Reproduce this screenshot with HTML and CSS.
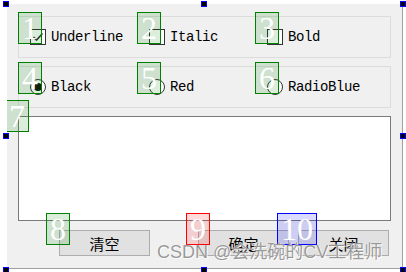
FILE: index.html
```html
<!DOCTYPE html>
<html>
  <head>
    <title>Form</title>
    <link rel="stylesheet" href="styles.css">
  </head>
  <body>
    <div class="canvas">
      <div class="form">
        <div class="group">
          <label class="item">
            <span class="check">
              <svg width="14" height="14" viewBox="0 0 14 14"><polyline points="2.5,7 5.5,10 11.5,3.5" fill="none" stroke="#333" stroke-width="1.6" /></svg>
            </span>
            <span class="label">Underline</span>
          </label>
          <label class="item">
            <span class="check"></span>
            <span class="label">Italic</span>
          </label>
          <label class="item">
            <span class="check"></span>
            <span class="label">Bold</span>
          </label>
        </div>

        <div class="group">
          <label class="item">
            <span class="radio checked"></span>
            <span class="label">Black</span>
          </label>
          <label class="item">
            <span class="radio"></span>
            <span class="label">Red</span>
          </label>
          <label class="item">
            <span class="radio"></span>
            <span class="label">RadioBlue</span>
          </label>
        </div>

        <div class="editor"></div>

        <div class="buttons">
          <button class="btn">清空</button>
          <span class="spacer"></span>
          <button class="btn">确定</button>
          <button class="btn">关闭</button>
        </div>

        <!-- tab order markers -->
        <div class="tab tab-1">1</div>
        <div class="tab tab-2">2</div>
        <div class="tab tab-3">3</div>
        <div class="tab tab-4">4</div>
        <div class="tab tab-5">5</div>
        <div class="tab tab-6">6</div>
        <div class="tab tab-7">7</div>
        <div class="tab tab-8">8</div>
        <div class="tab red tab-9">9</div>
        <div class="tab blue tab-10">10</div>
      </div>

      <div class="watermark">CSDN @会洗碗的CV工程师</div>

      <!-- selection handles -->
      <span class="handle h-tl"></span>
      <span class="handle h-tm"></span>
      <span class="handle h-tr"></span>
      <span class="handle h-ml"></span>
      <span class="handle h-mr"></span>
      <span class="handle h-bl"></span>
      <span class="handle h-bm"></span>
      <span class="handle h-br"></span>
    </div>
  </body>
</html>
```

FILE: styles.css
```css
body {
  margin: 0;
  background: #ffffff;
  font-family: "Liberation Mono", "DejaVu Sans Mono", monospace;
}

.canvas {
  position: relative;
  width: 406px;
  height: 272px;
  padding: 4px 0 0 7px;
  box-sizing: border-box;
}

.form {
  position: relative;
  width: 396px;
  height: 265px;
  box-sizing: border-box;
  background: #f0f0f0;
  border-right: 1px solid #a0a0a0;
  border-bottom: 1px solid #a0a0a0;
  padding: 12px 11px 0 11px;
  display: flex;
  flex-direction: column;
  overflow: hidden;
}

.group {
  height: 42px;
  box-sizing: border-box;
  border: 1px solid #dcdcdc;
  padding-left: 11px;
  margin-bottom: 8px;
  display: grid;
  grid-template-columns: 119px 118px 1fr;
  align-items: center;
}

.item {
  display: flex;
  align-items: center;
  gap: 5px;
}

.label {
  font-size: 14px;
  letter-spacing: -0.4px;
  color: #000;
  line-height: 16px;
}

.check {
  width: 16px;
  height: 16px;
  box-sizing: border-box;
  border: 1px solid #333;
  background: #fff;
  display: flex;
  align-items: center;
  justify-content: center;
}

.radio {
  width: 16px;
  height: 16px;
  box-sizing: border-box;
  border: 1px solid #333;
  border-radius: 50%;
  background: #fff;
  display: flex;
  align-items: center;
  justify-content: center;
}

.radio.checked::after {
  content: "";
  width: 8px;
  height: 8px;
  border-radius: 50%;
  background: #111;
}

.editor {
  height: 105px;
  box-sizing: border-box;
  border: 1px solid #7a7a7a;
  background: #fff;
  margin-bottom: 9px;
}

.buttons {
  display: flex;
  padding: 0 2px 0 41px;
  gap: 9px;
}

.spacer {
  flex: 1;
}

.btn {
  width: 91px;
  height: 26px;
  box-sizing: border-box;
  border: 1px solid #adadad;
  background: #e1e1e1;
  font-family: "Noto Sans CJK SC", sans-serif;
  font-size: 15px;
  color: #000;
  padding: 0;
}

/* Tab order markers */
.tab {
  position: absolute;
  width: 24px;
  height: 32px;
  box-sizing: border-box;
  border: 1px solid #008000;
  background: rgba(0, 128, 0, 0.14);
  color: #fff;
  font-family: "Liberation Serif", serif;
  font-size: 32px;
  line-height: 30px;
  text-align: center;
}

.tab.red {
  border-color: #ff0000;
  background: rgba(255, 0, 0, 0.14);
}

.tab.blue {
  width: 40px;
  border-color: #0000ff;
  background: rgba(0, 0, 255, 0.14);
}

.tab-1 { left: 11px; top: 8px; }
.tab-2 { left: 130px; top: 8px; }
.tab-3 { left: 248px; top: 8px; }
.tab-4 { left: 11px; top: 58px; }
.tab-5 { left: 130px; top: 58px; }
.tab-6 { left: 248px; top: 58px; }
.tab-7 { left: -2px; top: 96px; }
.tab-8 { left: 39px; top: 209px; }
.tab-9 { left: 179px; top: 209px; }
.tab-10 { left: 270px; top: 209px; }

.watermark {
  position: absolute;
  left: 157px;
  top: 241px;
  font-family: "Liberation Sans", "Noto Sans CJK SC", sans-serif;
  font-size: 18px;
  line-height: 22px;
  color: rgba(120, 120, 120, 0.75);
  text-shadow: 0 0 1px #fff, 1px 1px 0 rgba(255, 255, 255, 0.8);
  white-space: nowrap;
}

.handle {
  position: absolute;
  width: 6px;
  height: 6px;
  box-sizing: border-box;
  border: 1px solid #0000ff;
  background: #000;
}

.h-tl { left: 3px; top: 1px; }
.h-tm { left: 201px; top: 1px; }
.h-tr { left: 400px; top: 1px; }
.h-ml { left: 3px; top: 133px; }
.h-mr { left: 400px; top: 133px; }
.h-bl { left: 3px; top: 267px; }
.h-bm { left: 201px; top: 267px; }
.h-br { left: 400px; top: 267px; }
```
